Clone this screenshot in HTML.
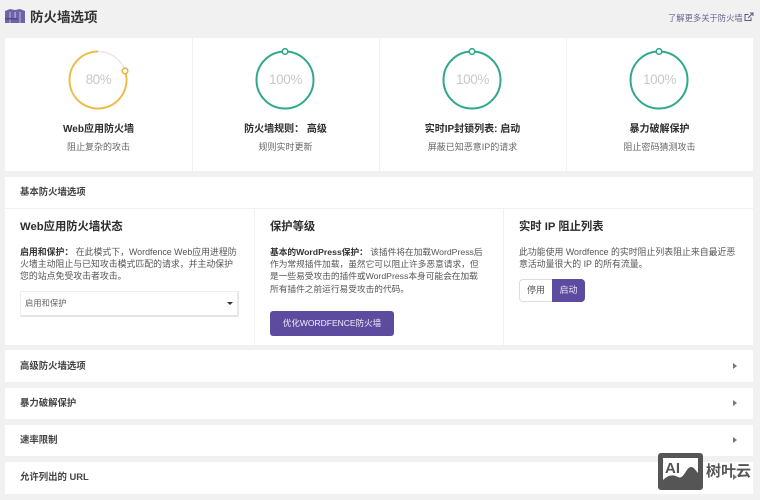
<!DOCTYPE html>
<html lang="zh-CN">
<head>
<meta charset="utf-8">
<title>防火墙选项</title>
<style>
html,body{margin:0;padding:0}
body{width:760px;height:500px;overflow:hidden;position:relative;background:#f1f1f1;font-family:"Liberation Sans","Noto Sans CJK SC",sans-serif;color:#333}
.a{position:absolute;white-space:nowrap}
.box{position:absolute;background:#fff;left:5px;width:748px}
.c{text-align:center;width:187px}
.t{font-size:10px;font-weight:700;color:#2d2d2d;line-height:16px}
.s{font-size:9px;color:#666;line-height:14px}
.h{font-size:11.3px;font-weight:700;color:#2d2d2d;line-height:18px}
.p{font-size:8.9px;color:#555;line-height:12.2px}
.p b{color:#333}
.r{font-size:9.4px;font-weight:700;color:#444;line-height:14px;left:20px}
.n{font-size:13.5px;color:#c8c8c8;line-height:18px;letter-spacing:-.4px}
.v{position:absolute;width:1px;background:#f0f0f0}
.tri{position:absolute;left:733px;width:0;height:0;border-left:4px solid #777;border-top:3.5px solid transparent;border-bottom:3.5px solid transparent}
svg{position:absolute}
</style>
</head>
<body>
<svg style="left:5px;top:8px" width="21" height="17" viewBox="0 0 21 17">
<path d="M0 3 L5 1 L10 2 L15 1 L20 3 L20 15 L0 15Z" fill="#6d63a8"/>
<g fill="#fff" opacity=".55"><rect x="4.500" y="4" width="1" height="11"/><rect x="9.500" y="4" width="1.200" height="6"/><rect x="14.500" y="4" width="1" height="11"/></g>
<rect x="0" y="10" width="13" height="1.500" fill="#4f4691"/>
</svg>
<div class="a" style="left:30px;top:8px;font-size:13.5px;font-weight:700;color:#333;line-height:20px">防火墙选项</div>
<div class="a" style="left:668px;top:11px;font-size:8.3px;color:#6a6290;line-height:14px">了解更多关于防火墙</div>
<svg style="left:744px;top:12px" width="10" height="10" viewBox="0 0 10 10" fill="none" stroke="#5b5380" stroke-width="1"><path d="M7 5.500V8.500H1V2.500H4.500"/><path d="M4 6L8.500 1.500M6 1H9V4"/></svg>

<div class="box" style="top:38px;height:133px"></div>
<div class="v" style="left:192px;top:38px;height:133px"></div>
<div class="v" style="left:379px;top:38px;height:133px"></div>
<div class="v" style="left:566px;top:38px;height:133px"></div>

<svg style="left:60px;top:42px" width="76" height="76" viewBox="0 0 76 76" fill="none">
<circle cx="38" cy="38" r="28.500" stroke="#e8e8e8" stroke-width="1.500"/>
<path d="M38 9.500 A28.500 28.500 0 1 0 65.100 29.200" stroke="#ecbd45" stroke-width="2"/>
<circle cx="65" cy="29" r="2.800" fill="#fff" stroke="#e3b73e" stroke-width="1.600"/>
</svg>
<svg style="left:247px;top:42px" width="76" height="76" viewBox="0 0 76 76" fill="none">
<circle cx="38" cy="38" r="28.500" stroke="#2fa98c" stroke-width="2"/>
<circle cx="38" cy="9.500" r="2.800" fill="#fff" stroke="#2fa98c" stroke-width="1.600"/>
</svg>
<svg style="left:434px;top:42px" width="76" height="76" viewBox="0 0 76 76" fill="none">
<circle cx="38" cy="38" r="28.500" stroke="#2fa98c" stroke-width="2"/>
<circle cx="38" cy="9.500" r="2.800" fill="#fff" stroke="#2fa98c" stroke-width="1.600"/>
</svg>
<svg style="left:621px;top:42px" width="76" height="76" viewBox="0 0 76 76" fill="none">
<circle cx="38" cy="38" r="28.500" stroke="#2fa98c" stroke-width="2"/>
<circle cx="38" cy="9.500" r="2.800" fill="#fff" stroke="#2fa98c" stroke-width="1.600"/>
</svg>
<div class="a c n" style="left:5px;top:71px">80%</div>
<div class="a c n" style="left:192px;top:71px">100%</div>
<div class="a c n" style="left:379px;top:71px">100%</div>
<div class="a c n" style="left:566px;top:71px">100%</div>

<div class="a c t" style="left:5px;top:122px">Web应用防火墙</div>
<div class="a c t" style="left:192px;top:122px">防火墙规则： 高级</div>
<div class="a c t" style="left:379px;top:122px">实时IP封锁列表: 启动</div>
<div class="a c t" style="left:566px;top:122px">暴力破解保护</div>
<div class="a c s" style="left:5px;top:140px">阻止复杂的攻击</div>
<div class="a c s" style="left:192px;top:140px">规则实时更新</div>
<div class="a c s" style="left:379px;top:140px">屏蔽已知恶意IP的请求</div>
<div class="a c s" style="left:566px;top:140px">阻止密码猜测攻击</div>

<div class="box" style="top:177px;height:168px"></div>
<div class="a" style="left:5px;top:208px;width:748px;height:1px;background:#f0f0f0"></div>
<div class="v" style="left:254px;top:209px;height:136px"></div>
<div class="v" style="left:503px;top:209px;height:136px"></div>
<div class="a r" style="top:185px">基本防火墙选项</div>

<div class="a h" style="left:20px;top:218px">Web应用防火墙状态</div>
<div class="a p" style="left:20px;top:246px"><b>启用和保护：</b> 在此模式下，Wordfence Web应用进程防<br>火墙主动阻止与已知攻击模式匹配的请求，并主动保护<br>您的站点免受攻击者攻击。</div>
<div class="a" style="left:20px;top:291px;width:219px;height:26px;background:#fff;border:1px solid #eee;border-bottom:2px solid #e4e4e4;border-right:2px solid #e8e8e8;box-sizing:border-box"></div>
<div class="a" style="left:25px;top:296px;font-size:8.3px;color:#666;line-height:14px">启用和保护</div>
<div class="a" style="left:227px;top:302px;width:0;height:0;border-top:3.5px solid #333;border-left:3.5px solid transparent;border-right:3.5px solid transparent"></div>

<div class="a h" style="left:270px;top:218px">保护等级</div>
<div class="a p" style="left:270px;top:246px;font-size:8.7px"><b>基本的WordPress保护：</b> 该插件将在加载WordPress后<br>作为常规插件加载，虽然它可以阻止许多恶意请求，但<br>是一些易受攻击的插件或WordPress本身可能会在加载<br>所有插件之前运行易受攻击的代码。</div>
<div class="a" style="left:270px;top:311px;width:124px;height:25px;background:#5d4ba0;border-radius:3px;color:#f0edf8;font-size:8.5px;line-height:25px;text-align:center">优化WORDFENCE防火墙</div>

<div class="a h" style="left:519px;top:218px">实时 IP 阻止列表</div>
<div class="a p" style="left:519px;top:246px">此功能使用 Wordfence 的实时阻止列表阻止来自最近恶<br>意活动量很大的 IP 的所有流量。</div>
<div class="a" style="left:519px;top:279px;width:33px;height:23px;box-sizing:border-box;border:1px solid #ddd;border-right:0;border-radius:4px 0 0 4px;background:#fff;color:#555;font-size:9px;line-height:21px;text-align:center">停用</div>
<div class="a" style="left:552px;top:279px;width:33px;height:23px;background:#5d4ba0;border-radius:0 4px 4px 0;color:#e6e2f3;font-size:9px;line-height:23px;text-align:center">启动</div>

<div class="box" style="top:350px;height:32px"></div>
<div class="box" style="top:388px;height:31px"></div>
<div class="box" style="top:425px;height:31px"></div>
<div class="box" style="top:462px;height:32px"></div>
<div class="a r" style="top:359px">高级防火墙选项</div>
<div class="a r" style="top:396px">暴力破解保护</div>
<div class="a r" style="top:433px">速率限制</div>
<div class="a r" style="top:470px">允许列出的 URL</div>
<div class="tri" style="top:362.500px"></div>
<div class="tri" style="top:399.500px"></div>
<div class="tri" style="top:436.500px"></div>
<div class="tri" style="top:473.500px"></div>

<svg style="left:658px;top:453px" width="45" height="37" viewBox="0 0 45 37">
<rect width="45" height="37" rx="3" fill="#555"/>
<rect x="5" y="5" width="35" height="26" fill="#fff"/>
<path d="M5 27 C10 22 15 21 20 24 C26 27 28 14 33 14 C36 14 38 18 40 20 V32 H5Z" fill="#555"/>
<text x="7" y="20" font-family="Liberation Sans" font-size="15" font-weight="700" fill="#555">AI</text>
</svg>
<div class="a" style="left:706px;top:462px;font-size:15px;font-weight:700;color:#555;line-height:20px">树叶云</div>
</body>
</html>
